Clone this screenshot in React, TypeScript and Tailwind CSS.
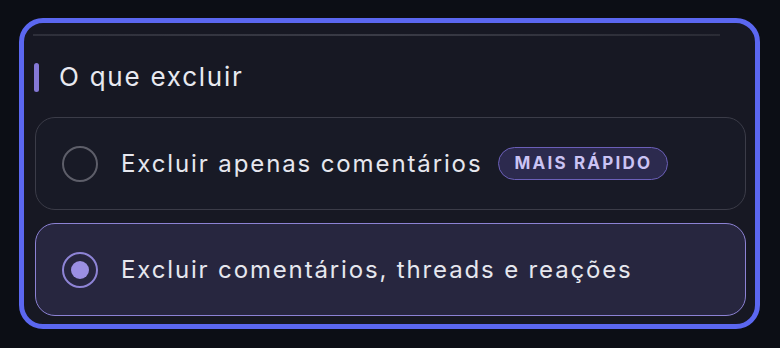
import React from "react";

export default function App() {
  const font = { fontFamily: "Inter, 'Noto Sans', sans-serif" };
  return (
    <div className="w-[780px] h-[348px] bg-[#0c0e15] pt-[18px] pl-[19px]" style={font}>
      <div className="w-[741px] h-[311px] rounded-[24px] border-[5px] border-[#5b67f0] bg-[#171823] pl-[11px] pr-[9px] pt-[11px] flex flex-col">
        <div className="h-[2px] ml-[-2px] mr-[26px] bg-gradient-to-r from-[#2e2f3a] via-[#3a3b46] to-[#2a2b35]" />
        <div className="flex items-center mt-[26px] h-[30px]">
          <div className="w-[5px] h-[29px] rounded-full bg-[#8478d6] ml-[-1px]" />
          <span className="ml-[20px] text-[26px] leading-none text-[#e8e9f0] tracking-[1.75px]">O que excluir</span>
        </div>
        <div className="mt-[25px] h-[93px] rounded-[20px] border-[1.5px] border-[#3b3c48] bg-[#181a26] flex items-center pl-[26px]">
          <div className="w-[36px] h-[36px] rounded-full border-2 border-[#5d5e69]" />
          <span className="ml-[23px] text-[24px] leading-none text-[#e6e7ee] tracking-[1.88px]">Excluir apenas comentários</span>
          <span className="ml-[16px] h-[33px] px-[15px] flex items-center rounded-full border-[1.5px] border-[#6b5fb8] bg-[#2c2a4e] text-[#cbc3f4] text-[17px] font-bold tracking-[0.13em]">MAIS RÁPIDO</span>
        </div>
        <div className="mt-[13px] h-[93px] rounded-[20px] border-[1.5px] border-[#8c82d4] bg-[#27263f] flex items-center pl-[26px]">
          <div className="w-[36px] h-[36px] rounded-full border-2 border-[#8e84d6] flex items-center justify-center">
            <div className="w-[18px] h-[18px] rounded-full bg-[#9b8fe3]" />
          </div>
          <span className="ml-[23px] text-[24px] leading-none text-[#e6e7ee] tracking-[1.85px]">Excluir comentários, threads e reações</span>
        </div>
      </div>
    </div>
  );
}
